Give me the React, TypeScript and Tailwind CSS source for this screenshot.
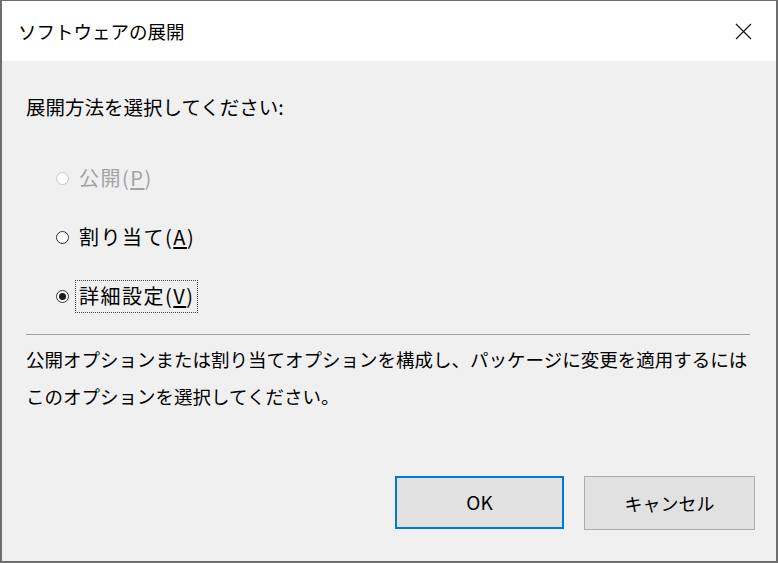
import React from "react";

const font = {
  fontFamily: '"Noto Sans CJK JP", "Noto Sans", sans-serif',
};

function Radio({ state }: { state: "disabled" | "off" | "on" }) {
  const border =
    state === "disabled" ? "border-[#c6c6c6]" : "border-[#333333]";
  return (
    <span
      className={`flex h-[13px] w-[13px] shrink-0 items-center justify-center rounded-full border bg-white ${border}`}
    >
      {state === "on" && (
        <span className="block h-[7px] w-[7px] rounded-full bg-[#1a1a1a]" />
      )}
    </span>
  );
}

export default function App() {
  return (
    <div
      className="flex h-[563px] w-[778px] flex-col border-x-2 border-t border-b-2 border-[#6e6e6e] bg-[#f0f0f0] text-black"
      style={font}
    >
      {/* Title bar */}
      <div className="flex h-[60px] shrink-0 items-center justify-between bg-white pl-[16px] pr-[24px]">
        <span className="text-[18.5px] leading-[28px]">ソフトウェアの展開</span>
        <svg width="17" height="17" viewBox="0 0 17 17" className="mt-[1px]">
          <path
            d="M1 1 L16 16 M16 1 L1 16"
            stroke="#1a1a1a"
            strokeWidth="1.3"
            fill="none"
          />
        </svg>
      </div>

      {/* Body */}
      <div className="flex flex-1 flex-col pl-[24px] pr-[26px]">
        <div className="mt-[34px] h-[24px] text-[19.5px] leading-[24px]">
          展開方法を選択してください:
        </div>

        <div className="ml-[30px] mt-[42px] flex flex-col gap-[25px] text-[20px] tracking-[1.5px]">
          <div className="flex h-[34px] items-center">
            <Radio state="disabled" />
            <span className="ml-[10px] leading-[24px] text-[#a3a3a3]">
              公開(<span className="underline underline-offset-2">P</span>)
            </span>
          </div>
          <div className="flex h-[34px] items-center">
            <Radio state="off" />
            <span className="ml-[10px] leading-[24px]">
              割り当て(<span className="underline underline-offset-2">A</span>)
            </span>
          </div>
          <div className="flex h-[34px] items-center">
            <Radio state="on" />
            <span className="ml-[6px] flex h-[33px] items-center border border-dotted border-[#444] pl-[3px] pr-[2px] leading-[24px]">
              詳細設定(<span className="underline underline-offset-2">V</span>)
            </span>
          </div>
        </div>

        <div className="mt-[21px] h-px bg-[#a0a0a0]" />

        <div className="mt-[6px] whitespace-nowrap text-[18.5px] leading-[37px]">
          公開オプションまたは割り当てオプションを構成し、パッケージに変更を適用するには
          <br />
          このオプションを選択してください。
        </div>

        <div className="mt-auto flex justify-end gap-[20px] pb-[31px]">
          <button className="flex h-[53px] w-[169px] items-center justify-center border-2 border-[#0078d7] bg-[#e1e1e1] text-[19px]">
            OK
          </button>
          <button className="mr-[-5px] flex h-[54px] w-[171px] items-center justify-center border border-[#adadad] bg-[#e1e1e1] text-[18px]">
            キャンセル
          </button>
        </div>
      </div>
    </div>
  );
}
